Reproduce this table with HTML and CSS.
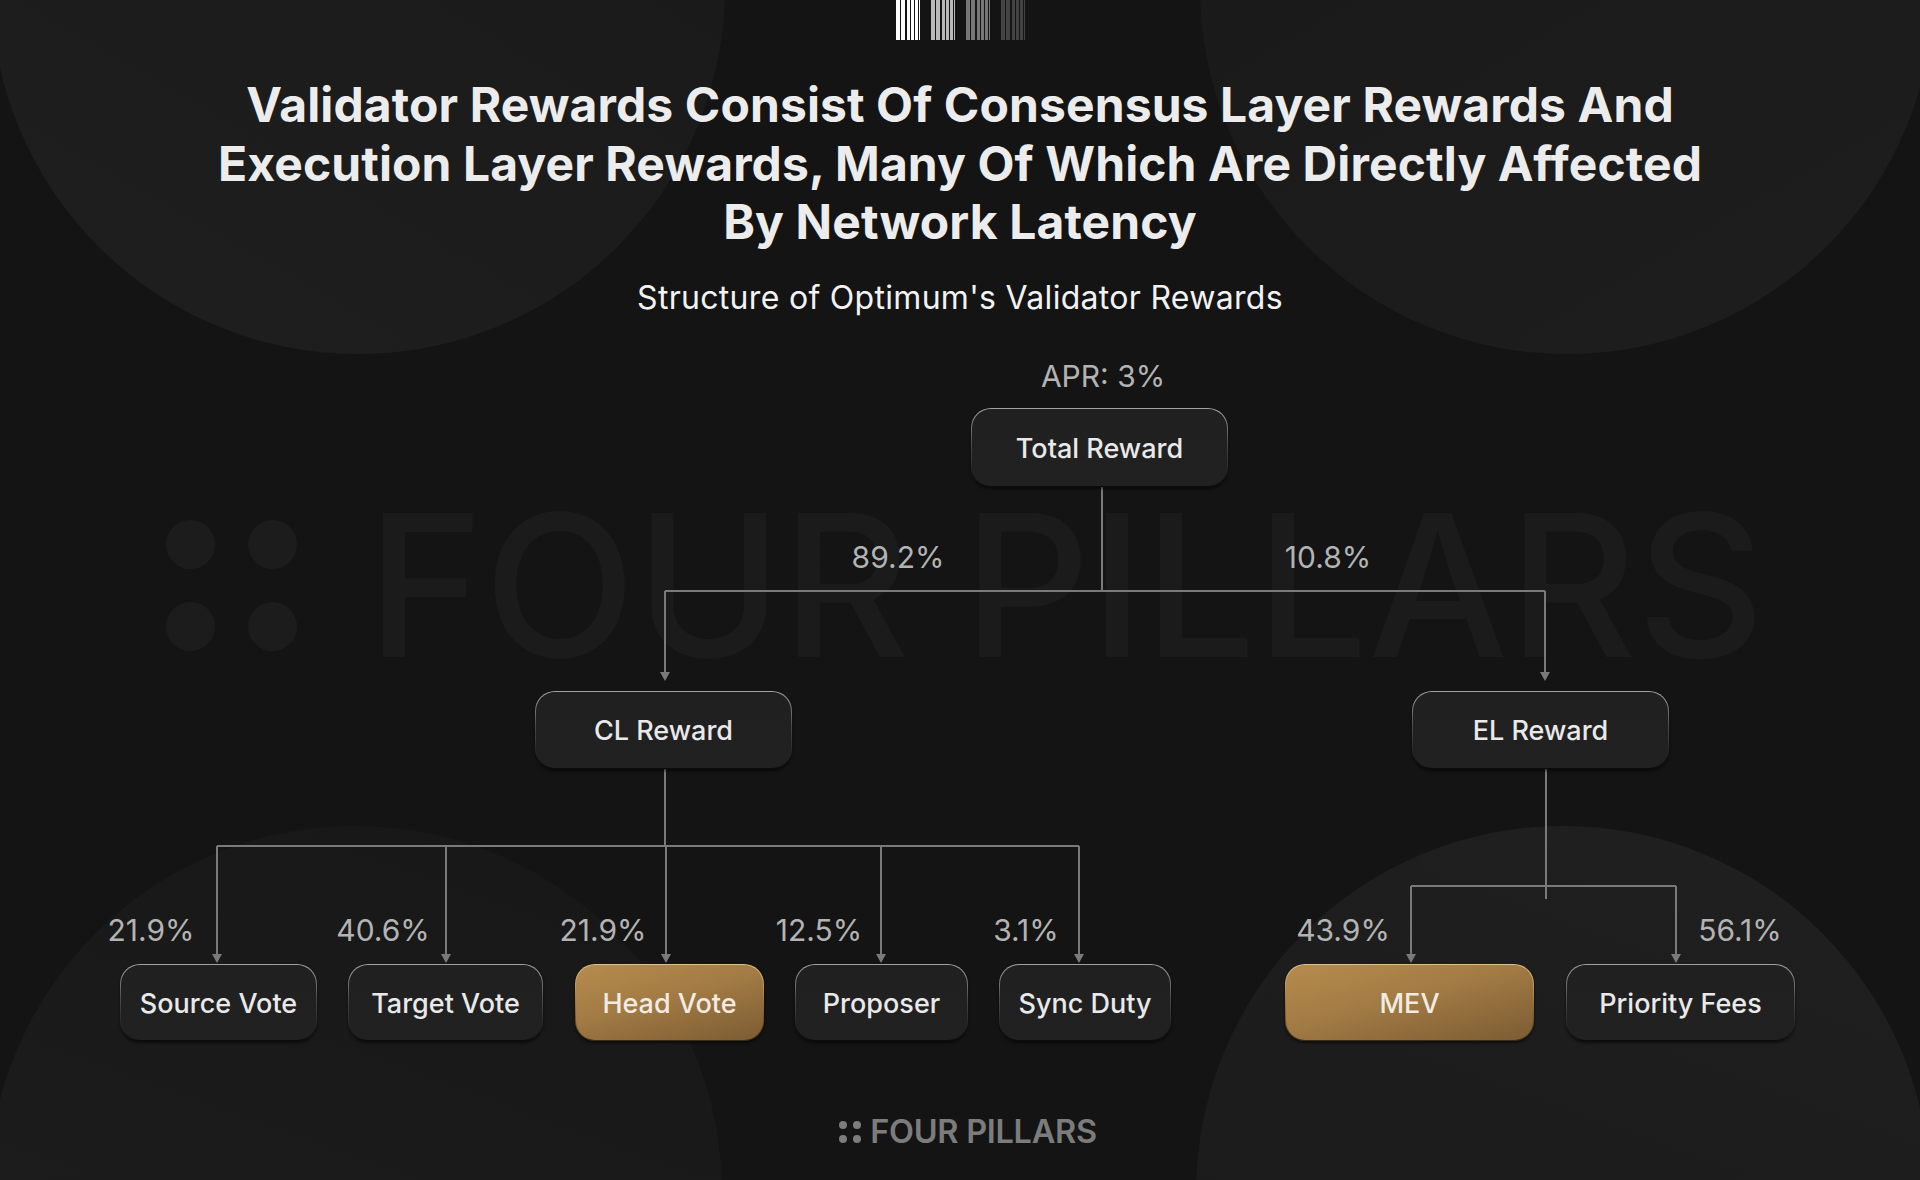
FILE: index.html
```html
<!DOCTYPE html>
<html lang="en">
<head>
<meta charset="utf-8">
<title>Structure of Optimum's Validator Rewards</title>
<link rel="stylesheet" href="styles.css">
</head>
<body>
<div class="canvas">
  <div class="orb orb-tl"></div>
  <div class="orb orb-tr"></div>
  <div class="orb orb-bl"></div>
  <div class="orb orb-br"></div>

  <div class="watermark" aria-hidden="true">
    <div class="wm-dots"><span></span><span></span><span></span><span></span></div>
    <div class="wm-text">FOUR PILLARS</div>
  </div>

  <header class="head">
    <div class="barcode">
      <svg class="bars b1" viewBox="0 0 24 40" width="24" height="40"><rect x="0" y="0" width="4" height="40"/><rect x="4" y="0" width="1" height="40" class="mid"/><rect x="5" y="0" width="4" height="40"/><rect x="9" y="0" width="2" height="40" class="mid"/><rect x="11" y="0" width="3" height="40"/><rect x="14" y="0" width="1" height="40" class="dk"/><rect x="15" y="0" width="3" height="40"/><rect x="18" y="0" width="1" height="40" class="mid"/><rect x="19" y="0" width="3" height="40"/><rect x="23" y="0" width="1" height="40"/></svg>
      <svg class="bars b2" viewBox="0 0 24 40" width="24" height="40"><rect x="0" y="0" width="4" height="40"/><rect x="4" y="0" width="1" height="40" class="mid"/><rect x="5" y="0" width="4" height="40"/><rect x="9" y="0" width="2" height="40" class="mid"/><rect x="11" y="0" width="3" height="40"/><rect x="14" y="0" width="1" height="40" class="dk"/><rect x="15" y="0" width="3" height="40"/><rect x="18" y="0" width="1" height="40" class="mid"/><rect x="19" y="0" width="3" height="40"/><rect x="23" y="0" width="1" height="40"/></svg>
      <svg class="bars b3" viewBox="0 0 24 40" width="24" height="40"><rect x="0" y="0" width="4" height="40"/><rect x="4" y="0" width="1" height="40" class="mid"/><rect x="5" y="0" width="4" height="40"/><rect x="9" y="0" width="2" height="40" class="mid"/><rect x="11" y="0" width="3" height="40"/><rect x="14" y="0" width="1" height="40" class="dk"/><rect x="15" y="0" width="3" height="40"/><rect x="18" y="0" width="1" height="40" class="mid"/><rect x="19" y="0" width="3" height="40"/><rect x="23" y="0" width="1" height="40"/></svg>
      <svg class="bars b4" viewBox="0 0 24 40" width="24" height="40"><rect x="0" y="0" width="4" height="40"/><rect x="4" y="0" width="1" height="40" class="mid"/><rect x="5" y="0" width="4" height="40"/><rect x="9" y="0" width="2" height="40" class="mid"/><rect x="11" y="0" width="3" height="40"/><rect x="14" y="0" width="1" height="40" class="dk"/><rect x="15" y="0" width="3" height="40"/><rect x="18" y="0" width="1" height="40" class="mid"/><rect x="19" y="0" width="3" height="40"/><rect x="23" y="0" width="1" height="40"/></svg>
    </div>
    <h1 class="title">Validator Rewards Consist Of Consensus Layer Rewards And<br>Execution Layer Rewards, Many Of Which Are Directly Affected<br>By Network Latency</h1>
    <p class="subtitle">Structure of Optimum's Validator Rewards</p>
  </header>

  <section class="diagram">
    <svg class="links" width="1920" height="720" viewBox="0 0 1920 720">
      <g class="line">
        <path d="M1102 147 V251"/>
        <path d="M665 251 H1545"/>
        <path d="M665 251 V334"/>
        <path d="M1545 251 V334"/>
        <path d="M665 429 V506"/>
        <path d="M217 506 H1079"/>
        <path d="M217 506 V616"/>
        <path d="M446 506 V616"/>
        <path d="M666 506 V616"/>
        <path d="M881 506 V616"/>
        <path d="M1079 506 V616"/>
        <path d="M1546 429 V559"/>
        <path d="M1411 546 H1676"/>
        <path d="M1411 546 V616"/>
        <path d="M1676 546 V616"/>
      </g>
      <g class="head-arrow">
        <path d="M660 332 H670 L665 341 Z"/>
        <path d="M1540 332 H1550 L1545 341 Z"/>
        <path d="M212 614 H222 L217 623 Z"/>
        <path d="M441 614 H451 L446 623 Z"/>
        <path d="M661 614 H671 L666 623 Z"/>
        <path d="M876 614 H886 L881 623 Z"/>
        <path d="M1074 614 H1084 L1079 623 Z"/>
        <path d="M1406 614 H1416 L1411 623 Z"/>
        <path d="M1671 614 H1681 L1676 623 Z"/>
      </g>
    </svg>

    <div class="pct pct-apr">APR: 3%</div>
    <div class="node node-total">Total Reward</div>

    <div class="pct pct-mid" style="left:898px">89.2%</div>
    <div class="pct pct-mid" style="left:1328px">10.8%</div>

    <div class="node node-mid" style="left:535px">CL Reward</div>
    <div class="node node-mid" style="left:1412px">EL Reward</div>

    <div class="pct pct-low" style="left:151px">21.9%</div>
    <div class="pct pct-low" style="left:383px">40.6%</div>
    <div class="pct pct-low" style="left:603px">21.9%</div>
    <div class="pct pct-low" style="left:819px">12.5%</div>
    <div class="pct pct-low" style="left:1026px">3.1%</div>
    <div class="pct pct-low" style="left:1343px">43.9%</div>
    <div class="pct pct-low" style="left:1740px">56.1%</div>

    <div class="node node-leaf" style="left:120px;width:197px">Source Vote</div>
    <div class="node node-leaf" style="left:348px;width:195px">Target Vote</div>
    <div class="node node-leaf gold" style="left:575px;width:189px">Head Vote</div>
    <div class="node node-leaf" style="left:795px;width:173px">Proposer</div>
    <div class="node node-leaf" style="left:999px;width:172px">Sync Duty</div>
    <div class="node node-leaf gold" style="left:1285px;width:249px">MEV</div>
    <div class="node node-leaf" style="left:1566px;width:229px">Priority Fees</div>
  </section>

  <footer class="brand">
    <div class="brand-dots"><span></span><span></span><span></span><span></span></div>
    <span class="brand-name">FOUR PILLARS</span>
  </footer>
</div>
</body>
</html>
```

FILE: styles.css
```css
* { box-sizing: border-box; }

html, body {
  margin: 0;
  padding: 0;
  background: #141414;
}

body {
  font-family: Inter, "Noto Sans", "Liberation Sans", sans-serif;
  color: #ececec;
}

.canvas {
  position: relative;
  width: 1920px;
  height: 1180px;
  overflow: hidden;
  background: #141414;
  display: flex;
  flex-direction: column;
  align-items: center;
}

/* decorative background discs */
.orb {
  position: absolute;
  width: 734px;
  height: 734px;
  border-radius: 50%;
  z-index: 0;
}
.orb-tl {
  left: -9px;
  top: -380px;
  background: linear-gradient(30deg, #1f1f1f 0%, #1b1b1b 55%, #181818 100%);
}
.orb-tr {
  left: 1200px;
  top: -380px;
  background: linear-gradient(150deg, #181818 0%, #1b1b1b 50%, #1e1e1e 100%);
}
.orb-bl {
  left: -12px;
  top: 826px;
  background: linear-gradient(20deg, #1e1e1e 0%, #1a1a1a 60%, #171717 100%);
}
.orb-br {
  left: 1196px;
  top: 826px;
  background: linear-gradient(200deg, #202020 0%, #1c1c1c 50%, #191919 100%);
}

/* giant watermark */
.watermark {
  position: absolute;
  left: 166px;
  top: 486px;
  display: flex;
  align-items: center;
  gap: 70px;
  z-index: 0;
}
.wm-dots {
  display: grid;
  grid-template-columns: 49px 49px;
  grid-template-rows: 49px 49px;
  gap: 33px;
}
.wm-dots span {
  border-radius: 50%;
  background: #1c1c1c;
}
.wm-text {
  font-size: 198px;
  line-height: 198px;
  font-weight: 500;
  color: #1b1b1b;
  letter-spacing: 0;
  white-space: nowrap;
}

/* header */
.head {
  position: relative;
  z-index: 1;
  display: flex;
  flex-direction: column;
  align-items: center;
}
.barcode {
  display: flex;
  gap: 11px;
  height: 40px;
  margin-left: 1px;
}
.bars { display: block; }
.bars rect { fill: currentColor; }
.bars rect.mid { fill: #141414; opacity: 0.55; }
.bars rect.dk { fill: #141414; }
.b1 { color: #ffffff; }
.b2 { color: #b9b9b9; }
.b3 { color: #767676; }
.b4 { color: #434343; }

.title {
  margin: 36px 0 0;
  font-size: 48px;
  line-height: 58.5px;
  font-weight: 700;
  text-align: center;
  color: #ececec;
  letter-spacing: 0.1px;
}
.subtitle {
  margin: 27px 0 0;
  font-size: 32px;
  line-height: 38px;
  font-weight: 400;
  color: #f2f2f2;
  letter-spacing: 0.3px;
}

/* diagram canvas */
.diagram {
  position: relative;
  z-index: 1;
  width: 1920px;
  height: 720px;
  margin-top: 23px;
  flex: none;
}
.links {
  position: absolute;
  left: 0;
  top: 0;
}
.line path {
  fill: none;
  stroke: #7a7a7a;
  stroke-width: 2;
}
.head-arrow path {
  fill: #7a7a7a;
}

.pct {
  position: absolute;
  transform: translateX(-50%);
  font-size: 30px;
  line-height: 40px;
  color: #b3b3b3;
  white-space: nowrap;
}
.pct-apr { left: 1103px; top: 16px; }
.pct-mid { top: 197px; }
.pct-low { top: 570px; }

.node {
  position: absolute;
  display: flex;
  align-items: center;
  justify-content: center;
  font-size: 27px;
  font-weight: 500;
  color: #e9e9e9;
  white-space: nowrap;
  border-radius: 20px;
  border: 1.5px solid transparent;
  padding-top: 2px;
  background:
    linear-gradient(#202020, #212121) padding-box,
    linear-gradient(180deg, #a3a3a3 0%, #4a4a4a 45%, #262626 80%, #0b0b0b 100%) border-box;
  box-shadow: 0 2px 3px rgba(0, 0, 0, 0.55);
}
.node-total { left: 971px; top: 68px; width: 257px; height: 79px; }
.node-mid { top: 351px; width: 257px; height: 78px; }
.node-leaf { top: 624px; height: 77px; }

.node.gold {
  color: #f1ebe2;
  background:
    linear-gradient(165deg, #b68b4d 0%, #a27b44 45%, #7c5c33 100%) padding-box,
    linear-gradient(180deg, #e0c08c 0%, #9a7442 50%, #3a2a15 100%) border-box;
}

/* footer brand */
.brand {
  position: relative;
  z-index: 1;
  margin-top: 52px;
  display: flex;
  align-items: center;
  gap: 9px;
  height: 40px;
  padding-left: 16px;
}
.brand-dots {
  display: grid;
  grid-template-columns: 8px 8px;
  grid-template-rows: 8px 8px;
  gap: 6px;
}
.brand-dots span {
  border-radius: 50%;
  background: #7c7c7c;
}
.brand-name {
  font-size: 32.5px;
  line-height: 40px;
  font-weight: 600;
  color: #7c7c7c;
  letter-spacing: -0.3px;
}
```
